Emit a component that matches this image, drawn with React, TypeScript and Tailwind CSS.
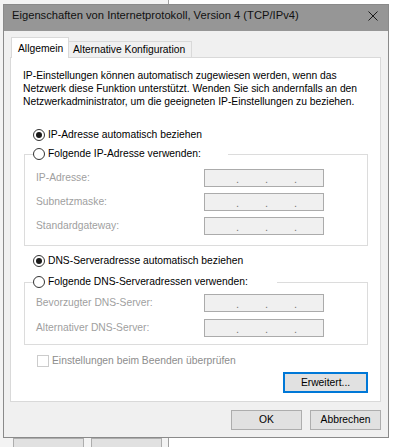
import React from "react";

function Radio({ checked }: { checked?: boolean }) {
  return (
    <span className="w-[12px] h-[12px] rounded-full border border-[#333333] bg-white flex items-center justify-center shrink-0">
      {checked && <span className="w-[6px] h-[6px] rounded-full bg-[#1a1a1a]" />}
    </span>
  );
}

function IpBox() {
  return (
    <div className="w-[120px] h-[18px] border border-[#ababab] bg-[#f0f0f0] flex items-end pl-[31px] gap-[26px] text-[#7a7a7a] text-[11px] leading-[14px]">
      <span className="w-[3px]">.</span>
      <span className="w-[3px]">.</span>
      <span className="w-[3px]">.</span>
    </div>
  );
}

function FieldRow({ label }: { label: string }) {
  return (
    <div className="flex items-center h-[18px]">
      <span className="w-[168px] text-[#a0a0a0] leading-[16px] whitespace-nowrap">{label}</span>
      <IpBox />
    </div>
  );
}

export default function App() {
  return (
    <div className="relative w-[395px] h-[447px] bg-white overflow-hidden text-[10.3px] text-black font-['Liberation_Sans',Arial,sans-serif]">
      {/* parent window behind */}
      <div className="absolute left-0 top-0 w-[169px] h-[447px] border-r border-[#a0a0a0] bg-[#f3f3f3]">
        <div className="absolute left-[13px] top-[438px] w-[71px] h-[20px] border border-[#adadad] bg-[#e1e1e1]" />
        <div className="absolute left-[91px] top-[438px] w-[71px] h-[20px] border border-[#adadad] bg-[#e1e1e1]" />
      </div>

      {/* dialog */}
      <div className="absolute left-[3px] top-[4px] w-[386px] border border-[#8a8a8a] bg-[#f0f0f0] flex flex-col">
        {/* title bar */}
        <div className="h-[26px] bg-[#969696] flex items-start justify-between pl-[8px] pr-[10px] pt-[2px]">
          <span className="leading-[16px] text-[#111111] text-[11.2px] whitespace-nowrap">
            Eigenschaften von Internetprotokoll, Version 4 (TCP/IPv4)
          </span>
          <svg width="10" height="10" viewBox="0 0 10 10" className="mt-[4px]">
            <path d="M0.5 0.5 L9.5 9.5 M9.5 0.5 L0.5 9.5" stroke="#1a1a1a" strokeWidth="1" />
          </svg>
        </div>

        {/* body */}
        <div className="pl-[6px] pr-[7px] pt-[6px] pb-[7px] flex flex-col">
          {/* tabs */}
          <div className="flex items-end pl-[1px]">
            <div className="relative z-10 -mb-px h-[21px] w-[58px] border-l border-t border-r border-[#d9d9d9] bg-white pl-[6px] pt-[3px] leading-[16px] whitespace-nowrap">
              Allgemein
            </div>
            <div className="h-[16px] w-[124px] -ml-px border-t border-r border-[#d9d9d9] bg-[#f0f0f0] pl-[5px] leading-[15px] whitespace-nowrap">
              Alternative Konfiguration
            </div>
          </div>

          {/* panel */}
          <div className="border border-[#d9d9d9] bg-white pt-[11px] pb-[8px] flex flex-col">
            <p className="pl-[12px] leading-[13px] whitespace-nowrap">
              IP-Einstellungen können automatisch zugewiesen werden, wenn das
              <br />
              Netzwerk diese Funktion unterstützt. Wenden Sie sich andernfalls an den
              <br />
              Netzwerkadministrator, um die geeigneten IP-Einstellungen zu beziehen.
            </p>

            <div className="mt-[19px] ml-[22px] flex items-center gap-[3px] h-[16px]">
              <Radio checked />
              <span className="leading-[16px]">IP-Adresse automatisch beziehen</span>
            </div>

            <fieldset className="mt-[3px] ml-[13px] mr-[12px] border border-[#dcdcdc]">
              <legend className="ml-[8px] flex items-center gap-[3px] h-[16px] pr-[27px]">
                <Radio />
                <span className="leading-[16px] whitespace-nowrap">Folgende IP-Adresse verwenden:</span>
              </legend>
              <div className="pl-[11px] pt-[7px] pb-[10px] flex flex-col gap-[6px]">
                <FieldRow label="IP-Adresse:" />
                <FieldRow label="Subnetzmaske:" />
                <FieldRow label="Standardgateway:" />
              </div>
            </fieldset>

            <div className="mt-[7px] ml-[22px] flex items-center gap-[3px] h-[16px]">
              <Radio checked />
              <span className="leading-[16px]">DNS-Serveradresse automatisch beziehen</span>
            </div>

            <fieldset className="mt-[5px] ml-[13px] mr-[12px] border border-[#dcdcdc]">
              <legend className="ml-[8px] flex items-center gap-[3px] h-[16px] pr-[29px]">
                <Radio />
                <span className="leading-[16px] whitespace-nowrap">Folgende DNS-Serveradressen verwenden:</span>
              </legend>
              <div className="pl-[11px] pt-[4px] pb-[7px] flex flex-col gap-[7px]">
                <FieldRow label="Bevorzugter DNS-Server:" />
                <FieldRow label="Alternativer DNS-Server:" />
              </div>
            </fieldset>

            <div className="mt-[8px] ml-[26px] flex items-center gap-[3px] h-[16px]">
              <span className="w-[12px] h-[12px] border border-[#cccccc] bg-white shrink-0" />
              <span className="leading-[16px] text-[#8d8d8d]">Einstellungen beim Beenden überprüfen</span>
            </div>

            <div className="mt-[3px] mr-[12px] flex justify-end">
              <button className="w-[85px] h-[21px] border-2 border-[#0078d7] bg-[#e1e1e1] flex items-center justify-center leading-[16px]">
                Erweitert...
              </button>
            </div>
          </div>

          {/* bottom buttons */}
          <div className="mt-[8px] flex justify-end gap-[8px]">
            <button className="w-[71px] h-[20px] border border-[#adadad] bg-[#e1e1e1] flex items-center justify-center leading-[16px]">
              OK
            </button>
            <button className="w-[71px] h-[20px] border border-[#adadad] bg-[#e1e1e1] flex items-center justify-center leading-[16px]">
              Abbrechen
            </button>
          </div>
        </div>
      </div>
    </div>
  );
}
